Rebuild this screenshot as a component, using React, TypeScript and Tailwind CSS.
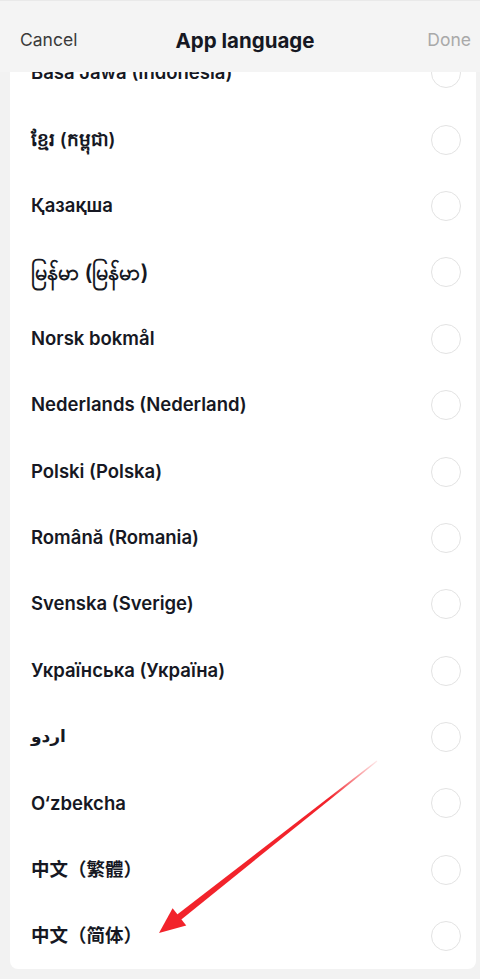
import React from "react";

const langs = [
  "Basa Jawa (Indonesia)",
  "ខ្មែរ (កម្ពុជា)",
  "Қазақша",
  "မြန်မာ (မြန်မာ)",
  "Norsk bokmål",
  "Nederlands (Nederland)",
  "Polski (Polska)",
  "Română (Romania)",
  "Svenska (Sverige)",
  "Українська (Україна)",
  "اردو",
  "O‘zbekcha",
  "中文（繁體）",
  "中文（简体）",
];

function Arrow() {
  const T = { x: 159, y: 933 };
  const E = { x: 377, y: 761 };
  const dx = E.x - T.x;
  const dy = E.y - T.y;
  const len = Math.hypot(dx, dy);
  const u = { x: dx / len, y: dy / len };
  const n = { x: -u.y, y: u.x };
  const headLen = 26;
  const headHalf = 11;
  const B = { x: T.x + u.x * headLen, y: T.y + u.y * headLen };
  const w1 = { x: B.x + n.x * headHalf, y: B.y + n.y * headHalf };
  const w2 = { x: B.x - n.x * headHalf, y: B.y - n.y * headHalf };
  const Bs = { x: T.x + u.x * (headLen - 4), y: T.y + u.y * (headLen - 4) };
  const sb = 3.2;
  const se = 0.6;
  const p = [
    [Bs.x + n.x * sb, Bs.y + n.y * sb],
    [E.x + n.x * se, E.y + n.y * se],
    [E.x - n.x * se, E.y - n.y * se],
    [Bs.x - n.x * sb, Bs.y - n.y * sb],
  ]
    .map((q) => q.join(","))
    .join(" ");
  return (
    <svg
      className="pointer-events-none absolute left-0 top-0"
      width={480}
      height={979}
      viewBox="0 0 480 979"
    >
      <defs>
        <linearGradient id="fade" gradientUnits="userSpaceOnUse" x1={T.x} y1={T.y} x2={E.x} y2={E.y}>
          <stop offset="0" stopColor="#f2232b" />
          <stop offset="0.78" stopColor="#f2232b" />
          <stop offset="1" stopColor="#f2232b" stopOpacity="0.1" />
        </linearGradient>
      </defs>
      <polygon points={p} fill="url(#fade)" />
      <polygon
        points={`${T.x},${T.y} ${w1.x},${w1.y} ${w2.x},${w2.y}`}
        fill="#f2232b"
      />
    </svg>
  );
}

export default function App() {
  return (
    <div
      className="relative h-[979px] w-[480px] overflow-hidden bg-[#f2f2f2]"
      style={{ fontFamily: 'Inter, "Noto Sans", "DejaVu Sans", "Noto Sans CJK SC", sans-serif' }}
    >
      <div className="relative z-10 flex h-[72px] items-center justify-between border-t border-[#e9e9e9] bg-[#f4f4f4] pl-[20px] pr-[9px] pt-[8px]">
        <span className="text-[17.5px] text-[#3a3a3a]">Cancel</span>
        <span className="absolute left-[245px] top-[40px] -translate-x-1/2 -translate-y-1/2 text-[20.5px] font-bold text-[#161823]">
          App language
        </span>
        <span className="text-[17.5px] text-[#a9a9a9]">Done</span>
      </div>
      <div className="-mt-[32px] ml-[10px] mr-[4px] overflow-hidden rounded-b-[8px] bg-white">
        {langs.map((l, i) => (
          <div key={l} className="flex h-[66.4px] items-center justify-between pl-[21px] pr-[15px]">
            <span
              className={
                i === 3
                  ? "text-[21.5px] font-semibold leading-none text-[#161823]"
                  : i === 10
                    ? "text-[17px] font-semibold text-[#161823]"
                    : "text-[18.5px] font-semibold text-[#161823]"
              }
            >
              {l}
            </span>
            <span className="h-[30px] w-[30px] rounded-full border-[1.5px] border-[#e3e3e3]" />
          </div>
        ))}
      </div>
      <Arrow />
    </div>
  );
}
